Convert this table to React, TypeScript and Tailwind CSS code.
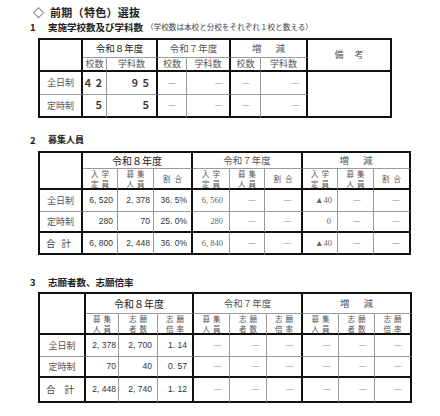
import React from 'react'

const jp = { fontFamily: '"Noto Sans CJK JP", "Noto Sans", sans-serif' }
const sans = { fontFamily: '"Liberation Sans", Arial, sans-serif' }
const serif = { fontFamily: '"Liberation Serif", "Times New Roman", serif' }

const D = '―'

type Edge = 'thin' | 'thick'

// each cell draws its own right and bottom line
function Cell({
  r = 'thin',
  b = 'thin',
  className = '',
  style,
  children,
}: {
  r?: Edge
  b?: Edge
  className?: string
  style?: React.CSSProperties
  children?: React.ReactNode
}) {
  const rc = r === 'thick' ? 'border-r-2 border-r-[#111]' : 'border-r border-r-[#9a9a9a]'
  const bc = b === 'thick' ? 'border-b-2 border-b-[#111]' : 'border-b border-b-[#9a9a9a]'
  return (
    <div className={`flex items-center min-w-0 overflow-hidden whitespace-nowrap ${rc} ${bc} ${className}`} style={style}>
      {children}
    </div>
  )
}

function Two({ a, b }: { a: string; b: string }) {
  return (
    <div className="w-full flex flex-col items-center leading-[10px] text-[7.5px] tracking-[3px] pl-[3px] text-[#555]">
      <span>{a}</span>
      <span>{b}</span>
    </div>
  )
}

function Label({ text }: { text: string }) {
  if (text === '合計') {
    return (
      <div className="w-full flex justify-between pl-[6px] pr-[10px] text-[9.5px] text-[#444]">
        <span>合</span>
        <span>計</span>
      </div>
    )
  }
  return <div className="w-full text-center text-[9px] text-[#555]">{text}</div>
}

function SchoolsTable() {
  const rows = [
    { label: '全日制', a: '４２', b: '９５' },
    { label: '定時制', a: '５', b: '５' },
  ]
  return (
    <div
      className="grid w-[354px] grid-cols-[43px_24px_51px_29px_44px_30px_47px_84px] grid-rows-[18px_14px_23px_23px] border-l-2 border-t-2 border-[#111]"
      style={jp}
    >
      <Cell r="thick" b="thick" className="row-span-2" />
      <Cell r="thick" className="col-span-2 justify-center text-[9.5px] text-[#222]">令和８年度</Cell>
      <Cell r="thick" className="col-span-2 justify-center text-[9.5px] text-[#555]">令和７年度</Cell>
      <Cell r="thick" className="col-span-2 justify-center text-[9.5px] text-[#555]">
        <span className="tracking-[14px] pl-[14px]">増減</span>
      </Cell>
      <Cell r="thick" b="thick" className="row-span-2 justify-center text-[9px] text-[#555]">
        <span className="tracking-[11px] pl-[11px]">備考</span>
      </Cell>
      {[0, 1, 2].map(g => (
        <React.Fragment key={g}>
          <Cell b="thick" className="justify-center text-[9px] text-[#555]">校数</Cell>
          <Cell r="thick" b="thick" className="justify-center text-[9px] text-[#555]">学科数</Cell>
        </React.Fragment>
      ))}
      {rows.map((row, i) => {
        const b: Edge = i === 1 ? 'thick' : 'thin'
        return (
          <React.Fragment key={i}>
            <Cell r="thick" b={b}>
              <Label text={row.label} />
            </Cell>
            <Cell b={b} className="justify-end pr-[1px] text-[9.5px] font-bold text-[#333] tracking-[1.5px]">{row.a}</Cell>
            <Cell r="thick" b={b} className="justify-end pr-[4px] text-[9.5px] font-bold text-[#333] tracking-[1.5px]">{row.b}</Cell>
            <Cell b={b} className="justify-center text-[8.5px] text-[#444]">{D}</Cell>
            <Cell r="thick" b={b} className="justify-end pr-[6px] text-[8.5px] text-[#444]">{D}</Cell>
            <Cell b={b} className="justify-center text-[8.5px] text-[#444]">{D}</Cell>
            <Cell r="thick" b={b} className="justify-end pr-[6px] text-[8.5px] text-[#444]">{D}</Cell>
            {i === 0 && <Cell r="thick" b="thick" className="row-span-2" />}
          </React.Fragment>
        )
      })}
    </div>
  )
}

type Val = { v: string; f: 'sans' | 'serif' | 'dash'; pr: number }

function DataTable({
  grid,
  subs,
  rows,
}: {
  grid: string
  subs: [string, string][]
  rows: { label: string; cells: Val[] }[]
}) {
  return (
    <div className={`grid border-l-2 border-t-2 border-[#111] ${grid}`} style={jp}>
      <Cell r="thick" b="thick" className="row-span-2" />
      <Cell r="thick" className="col-span-3 justify-center text-[10px] text-[#222]">令和８年度</Cell>
      <Cell r="thick" className="col-span-3 justify-center text-[9.5px] text-[#555]">令和７年度</Cell>
      <Cell r="thick" className="col-span-3 justify-center text-[9.5px] text-[#555]">
        <span className="tracking-[14px] pl-[14px]">増減</span>
      </Cell>
      {[0, 1, 2].map(g => (
        <React.Fragment key={g}>
          {subs.map((s, j) => (
            <Cell key={j} r={j === 2 ? 'thick' : 'thin'} b="thick" className="justify-center">
              {s[1] === '' ? (
                <span className="text-[7.5px] tracking-[4px] pl-[4px] text-[#555]">{s[0]}</span>
              ) : (
                <Two a={s[0]} b={s[1]} />
              )}
            </Cell>
          ))}
        </React.Fragment>
      ))}
      {rows.map((row, i) => {
        const b: Edge = i >= rows.length - 2 ? 'thick' : 'thin'
        return (
          <React.Fragment key={i}>
            <Cell r="thick" b={b}>
              <Label text={row.label} />
            </Cell>
            {row.cells.map((c, j) => {
              const r: Edge = j % 3 === 2 ? 'thick' : 'thin'
              const st: React.CSSProperties = { paddingRight: c.pr }
              if (c.f === 'dash') {
                return (
                  <Cell key={j} r={r} b={b} className="justify-end text-[8.5px] text-[#444]" style={st}>
                    {D}
                  </Cell>
                )
              }
              if (c.f === 'serif') {
                return (
                  <Cell key={j} r={r} b={b} className="justify-end text-[8.5px] text-[#666]" style={{ ...st, ...serif }}>
                    {c.v}
                  </Cell>
                )
              }
              return (
                <Cell key={j} r={r} b={b} className="justify-end text-[8.5px] text-[#333]" style={{ ...st, ...sans }}>
                  {c.v}
                </Cell>
              )
            })}
          </React.Fragment>
        )
      })}
    </div>
  )
}

const n = (v: string, pr: number): Val => ({ v, f: 'sans', pr })
const sf = (v: string, pr: number): Val => ({ v, f: 'serif', pr })
const d = (pr: number): Val => ({ v: D, f: 'dash', pr })

export default function App() {
  return (
    <div className="w-[440px] h-[416px] bg-white overflow-hidden text-[#222]" style={jp}>
      <div className="mt-[3px] h-[18px] flex items-center pl-[27px] font-bold">
        <span className="w-[23px] text-[11px] text-center">◇</span>
        <span className="text-[11px] tracking-[0.3px]">前期（特色）選抜</span>
      </div>
      <div className="h-[12px] flex items-center pl-[30px] whitespace-nowrap">
        <span className="w-[18px] text-[9.5px] font-bold">1</span>
        <span className="text-[9.5px] font-bold">実施学校数及び学科数</span>
        <span className="ml-[3px] text-[7.6px] text-[#444]">（学校数は本校と分校をそれぞれ１校と数える）</span>
      </div>
      <div className="mt-[5px] pl-[38px]">
        <SchoolsTable />
      </div>

      <div className="mt-[15px] h-[14px] flex items-center pl-[30px] font-bold">
        <span className="w-[18px] text-[9.5px]">2</span>
        <span className="text-[9px]">募集人員</span>
      </div>
      <div className="mt-[4px] pl-[38px]">
        <DataTable
          grid="w-[373px] grid-cols-[43px_35px_36px_39px_37px_35px_38px_35px_36px_37px] grid-rows-[16px_21px_22px_21px_22px]"
          subs={[
            ['入学', '定員'],
            ['募集', '人員'],
            ['割合', ''],
          ]}
          rows={[
            { label: '全日制', cells: [n('6, 520', 4), n('2, 378', 3), n('36. 5%', 4), sf('6, 560', 6), d(8), d(9), sf('▲40', 5), d(12), d(9)] },
            { label: '定時制', cells: [n('280', 4), n('70', 3), n('25. 0%', 4), sf('280', 6), d(8), d(9), sf('0', 6), d(12), d(9)] },
            { label: '合計', cells: [n('6, 800', 4), n('2, 448', 3), n('36. 0%', 4), sf('6, 840', 6), d(8), d(9), sf('▲40', 5), d(12), d(9)] },
          ]}
        />
      </div>

      <div className="mt-[20px] h-[14px] flex items-center pl-[30px] font-bold">
        <span className="w-[18px] text-[9.5px]">3</span>
        <span className="text-[9.5px]">志願者数、志願倍率</span>
      </div>
      <div className="mt-[3px] pl-[38px]">
        <DataTable
          grid="w-[374px] grid-cols-[46px_33px_39px_36px_36px_37px_36px_36px_36px_37px] grid-rows-[20px_21px_22px_21px_25px]"
          subs={[
            ['募集', '人員'],
            ['志願', '者数'],
            ['志願', '倍率'],
          ]}
          rows={[
            { label: '全日制', cells: [n('2, 378', 2), n('2, 700', 5), n('1. 14', 5), d(7), d(6), d(7), d(7), d(7), d(8)] },
            { label: '定時制', cells: [n('70', 2), n('40', 5), n('0. 57', 5), d(7), d(6), d(7), d(7), d(7), d(8)] },
            { label: '合計', cells: [n('2, 448', 2), n('2, 740', 5), n('1. 12', 5), d(7), d(6), d(7), d(7), d(7), d(8)] },
          ]}
        />
      </div>
    </div>
  )
}
